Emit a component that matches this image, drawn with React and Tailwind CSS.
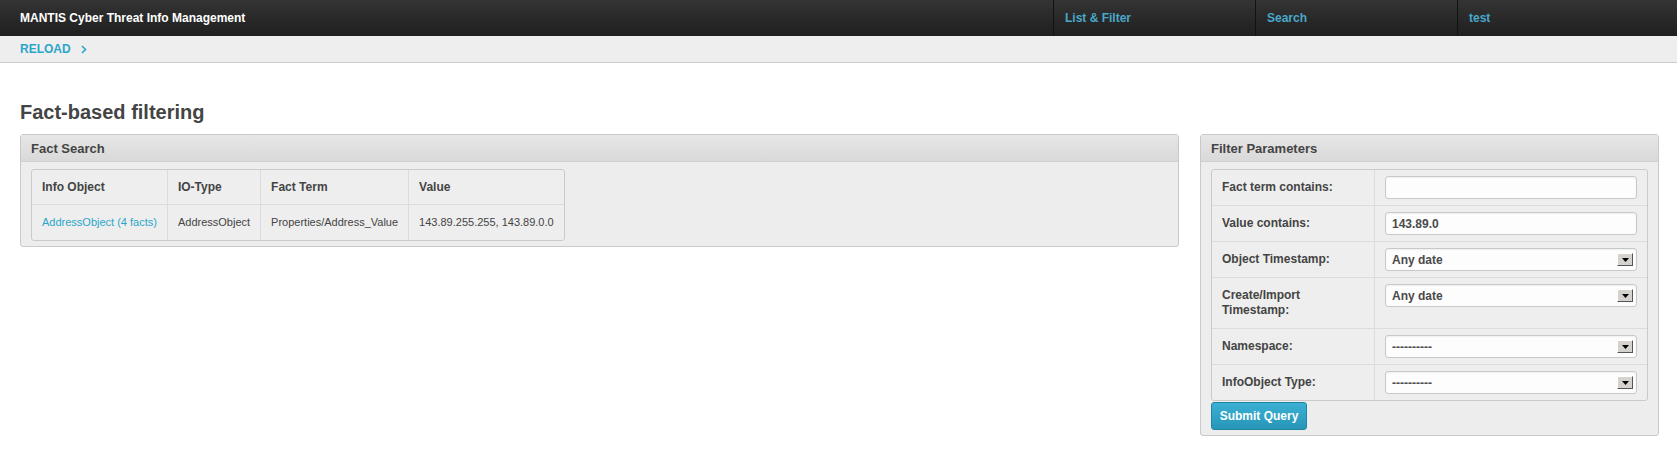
import React from 'react';

const navItems = ['List & Filter', 'Search', 'test'];

const factRows = [
  { object: 'AddressObject (4 facts)', type: 'AddressObject', term: 'Properties/Address_Value', value: '143.89.255.255, 143.89.0.0' },
];

const SelectArrow = () => (
  <span className="flex h-[13px] w-[16px] items-center justify-center border border-t-white border-l-white border-b-[#555] border-r-[#555] bg-[#d6d3ce]">
    <svg width="7" height="4" viewBox="0 0 7 4">
      <polygon points="0,0 7,0 3.5,4" fill="#000" />
    </svg>
  </span>
);

const Field = ({ value, select }) => (
  <div className="flex h-[23px] w-full items-center justify-between rounded-[3px] border border-[#c8c8c8] bg-[#fdfdfd] pl-[6px] pr-[3px] text-[12px] font-bold text-[#4a4a4a] shadow-[inset_0_1px_2px_rgba(0,0,0,0.06)]">
    <span>{value}</span>
    {select && <SelectArrow />}
  </div>
);

const params = [
  { label: 'Fact term contains:', value: '' },
  { label: 'Value contains:', value: '143.89.0' },
  { label: 'Object Timestamp:', value: 'Any date', select: true },
  { label: 'Create/Import Timestamp:', value: 'Any date', select: true, tall: true },
  { label: 'Namespace:', value: '----------', select: true },
  { label: 'InfoObject Type:', value: '----------', select: true },
];

const Panel = ({ title, children, className }) => (
  <div className={`rounded-[3px] border border-[#c9c9c9] bg-[#ededed] ${className}`}>
    <div className="flex h-[27px] items-center border-b border-[#cfcfcf] bg-linear-to-b from-[#e6e6e6] to-[#d9d9d9] px-[10px] pt-[2px] text-[13px] font-bold text-[#444]">
      {title}
    </div>
    <div className="px-[10px] pt-[7px] pb-[5px]">{children}</div>
  </div>
);

export default function App() {
  return (
    <div className="min-h-[461px] bg-white font-['Liberation_Sans',Arial,sans-serif]">
      {/* top bar */}
      <div className="flex h-[36px] bg-linear-to-b from-[#343434] to-[#1f1f1f]">
        <div className="flex flex-1 items-center px-[20px] text-[12px] font-bold text-white">
          MANTIS Cyber Threat Info Management
        </div>
        {navItems.map((item, i) => (
          <div
            key={item}
            className={`flex items-center border-l border-[#121212] px-[11px] text-[12px] font-bold text-[#49a7c9] ${i === 2 ? 'w-[220px]' : 'w-[202px]'}`}
          >
            {item}
          </div>
        ))}
      </div>

      {/* breadcrumbs */}
      <div className="flex h-[27px] items-center gap-[8px] border-b border-[#cccccc] bg-[#eeeeee] px-[20px]">
        <span className="text-[12px] font-bold text-[#2ba6cb]">RELOAD</span>
        <svg width="6" height="9" viewBox="0 0 6 9" className="ml-[2px]">
          <path d="M1 1 L4.5 4.5 L1 8" stroke="#2ba6cb" strokeWidth="1.6" fill="none" />
        </svg>
      </div>

      <h1 className="mt-[37px] mb-[10px] px-[20px] text-[20px] leading-[24px] font-bold text-[#444]">
        Fact-based filtering
      </h1>

      <div className="flex items-start gap-[21px] pr-[18px] pl-[20px]">
        <Panel title="Fact Search" className="flex-1">
          <div className="grid w-fit grid-cols-[repeat(4,auto)] overflow-hidden rounded-[3px] border border-[#cacaca] bg-[#eeeeee]">
            {['Info Object', 'IO-Type', 'Fact Term', 'Value'].map((h, i) => (
              <div
                key={h}
                className={`flex h-[35px] items-center border-b border-[#dcdcdc] px-[10px] text-[12px] font-bold text-[#444] ${i < 3 ? 'border-r' : ''}`}
              >
                {h}
              </div>
            ))}
            {factRows.map((r) => (
              <React.Fragment key={r.object}>
                <div className="flex h-[35px] items-center border-r border-[#dcdcdc] px-[10px] text-[11px] text-[#2ba6cb]">{r.object}</div>
                <div className="flex h-[35px] items-center border-r border-[#dcdcdc] px-[10px] text-[11px] text-[#444]">{r.type}</div>
                <div className="flex h-[35px] items-center border-r border-[#dcdcdc] px-[10px] text-[11px] text-[#444]">{r.term}</div>
                <div className="flex h-[35px] items-center px-[10px] text-[11px] text-[#444]">{r.value}</div>
              </React.Fragment>
            ))}
          </div>
        </Panel>

        <Panel title="Filter Parameters" className="w-[459px]">
          <div className="overflow-hidden rounded-[3px] border border-[#cacaca] bg-[#eeeeee]">
            {params.map((p, i) => (
              <div key={p.label} className={`flex ${i > 0 ? 'border-t border-[#dcdcdc]' : ''}`}>
                <div
                  className={`flex w-[163px] shrink-0 items-center border-r border-[#dcdcdc] px-[10px] text-[12px] leading-[15px] font-bold text-[#444] ${p.tall ? 'h-[50px] pr-[40px]' : 'h-[35px]'}`}
                >
                  {p.label}
                </div>
                <div className="flex-1 px-[10px] pt-[6px]">
                  <Field value={p.value} select={p.select} />
                </div>
              </div>
            ))}
          </div>
          <button className="mt-[1px] h-[28px] w-[96px] rounded-[3px] border border-[#2284a1] bg-linear-to-b from-[#3bb0d4] to-[#2796b8] text-[12px] font-bold text-white">
            Submit Query
          </button>
        </Panel>
      </div>
    </div>
  );
}
